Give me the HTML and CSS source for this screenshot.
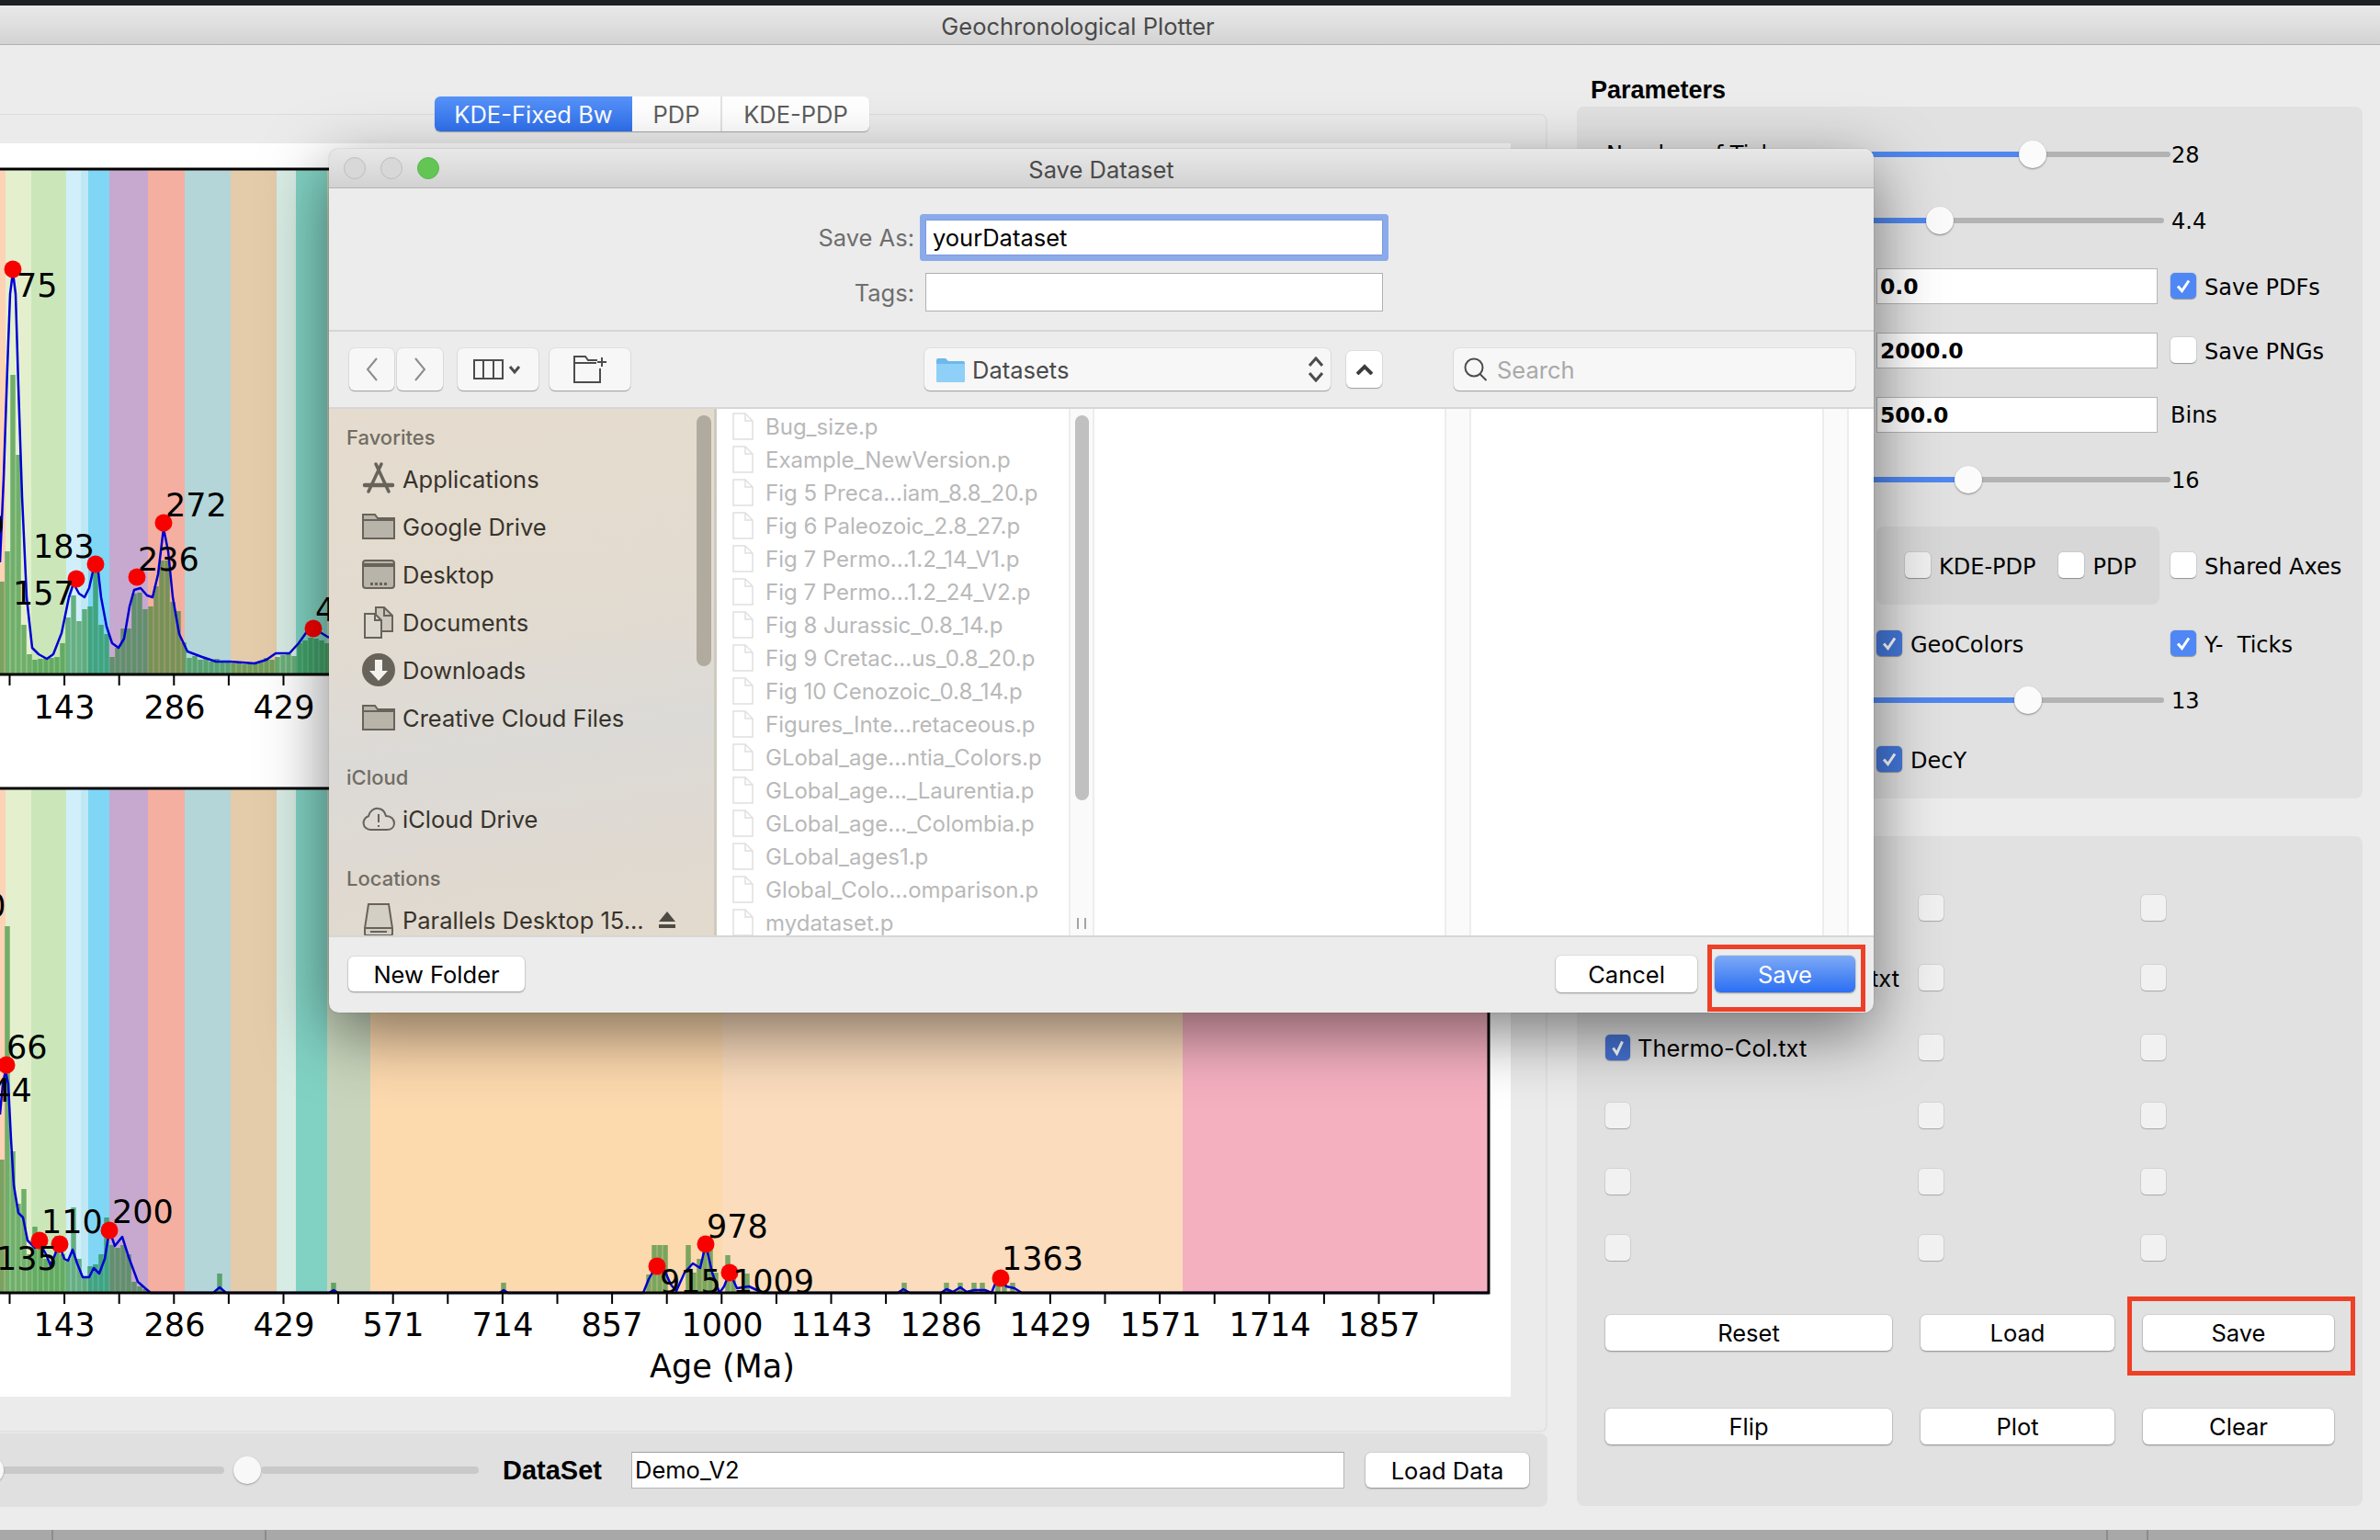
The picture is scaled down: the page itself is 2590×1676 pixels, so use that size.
FILE: index.html
```html
<!DOCTYPE html>
<html lang="en">
<head>
    <meta charset="UTF-8">
    <title>Geochronological Plotter</title>
    <link rel="stylesheet" href="styles.css">
</head>
<body>
    <div class="menubar"></div>
    <div class="titlebar">Geochronological Plotter</div>

    <div class="content">
        <div class="left-col">
            <div class="tabpane">
                <div class="tabs">
                    <span class="tab tab-active tab-kde">KDE-Fixed Bw</span>
                    <span class="tab tab-pdp">PDP</span>
                    <span class="tab tab-both">KDE-PDP</span>
                </div>
                <div class="figure">
                    <svg class="plot" width="1644" height="1364" viewBox="0 156 1644 1364">
                        <defs>
                            <g id="bands">
                                <rect x="0" y="0" width="6" height="1" fill="#fdd3b5"/>
                                <rect x="6" y="0" width="28" height="1" fill="#e4f0cd"/>
                                <rect x="34" y="0" width="38" height="1" fill="#cbe7ba"/>
                                <rect x="72" y="0" width="16" height="1" fill="#d0effb"/>
                                <rect x="88" y="0" width="8" height="1" fill="#bfe8f4"/>
                                <rect x="96" y="0" width="23" height="1" fill="#7fd7f5"/>
                                <rect x="119" y="0" width="42" height="1" fill="#c7a9cf"/>
                                <rect x="161" y="0" width="40" height="1" fill="#f4afa1"/>
                                <rect x="201" y="0" width="50" height="1" fill="#b4d6d9"/>
                                <rect x="251" y="0" width="50" height="1" fill="#e4cba9"/>
                                <rect x="301" y="0" width="21" height="1" fill="#d7ece4"/>
                                <rect x="322" y="0" width="34" height="1" fill="#81d2c3"/>
                                <rect x="356" y="0" width="47" height="1" fill="#c8d5bc"/>
                                <rect x="403" y="0" width="383" height="1" fill="#fdd9ae"/>
                                <rect x="786" y="0" width="501" height="1" fill="#fbdcbd"/>
                                <rect x="1287" y="0" width="333" height="1" fill="#f5b0c0"/>
                            </g>
                            <path id="ticks" d="M10.5 0v11M70.1 0v11M129.7 0v11M189.3 0v11M248.9 0v11M308.5 0v11M368.1 0v11M427.7 0v11M487.3 0v11M546.9 0v11M606.5 0v11M666.1 0v11M725.7 0v11M785.3 0v11M844.9 0v11M904.5 0v11M964.1 0v11M1023.7 0v11M1083.3 0v11M1142.9 0v11M1202.5 0v11M1262.1 0v11M1321.7 0v11M1381.3 0v11M1440.9 0v11M1500.5 0v11M1560.1 0v11"/>
                        </defs>

                        <!-- upper chart -->
                        <use href="#bands" transform="translate(0 185) scale(1 548)"/>
                        <path class="bars" d="M2 733V633M8 733V600M14 733V408M20 733V495M26 733V680M32 733V712M38 733V718M44 733V717M50 733V716M56 733V716M62 733V715M68 733V700M74 733V672M80 733V648M86 733V676M92 733V663M98 733V660M104 733V617M110 733V680M116 733V690M122 733V715M128 733V705M134 733V684M140 733V684M146 733V646M152 733V645M158 733V663M164 733V660M170 733V638M176 733V610M182 733V610M188 733V655M194 733V665M200 733V699M206 733V716M212 733V714M218 733V718M224 733V716M230 733V720M236 733V717M242 733V721M248 733V720M254 733V722M260 733V720M266 733V723M272 733V721M278 733V722M284 733V719M290 733V716M296 733V718M302 733V715M308 733V713M314 733V712M320 733V714M326 733V700M332 733V697M338 733V694M344 733V695M350 733V697M356 733V700"/>
                        <polyline class="curve" points="0,612 4,520 8,400 11,320 14,296 17,320 20,420 24,540 29,650 35,705 42,712 51,717 58,712 67,689 75,650 80,635 86,646 92,650 97,640 102,618 106,614 110,650 116,682 122,700 129,705 135,695 141,660 146,642 153,640 160,648 166,650 172,625 178,575 183,600 188,650 195,690 204,709 220,715 235,720 250,720 277,722 290,718 300,711 315,711 325,700 335,686 345,686 358,694"/>
                        <rect class="frame" x="-5" y="184" width="1625" height="550"/>
                        <use href="#ticks" class="tick" y="735"/>
                        <g class="dots">
                            <circle cx="14" cy="293" r="9.5"/>
                            <circle cx="83" cy="630" r="9.5"/>
                            <circle cx="104" cy="614" r="9.5"/>
                            <circle cx="149" cy="628" r="9.5"/>
                            <circle cx="178" cy="569" r="9.5"/>
                            <circle cx="341" cy="684" r="9.5"/>
                        </g>
                        <g class="peak">
                            <text x="18" y="323">75</text>
                            <text x="180" y="562">272</text>
                            <text x="36" y="607">183</text>
                            <text x="150" y="621">236</text>
                            <text x="14" y="658">157</text>
                            <text x="343" y="676">4</text>
                            <text x="-17" y="584">9</text>
                        </g>
                        <g class="axis">
                            <text x="70" y="782">143</text>
                            <text x="190" y="782">286</text>
                            <text x="309" y="782">429</text>
                        </g>

                        <!-- lower chart -->
                        <use href="#bands" transform="translate(0 859) scale(1 547)"/>
                        <path class="bars" d="M2 1406V1262M8 1406V1008M14 1406V1253M20 1406V1310M26 1406V1294M32 1406V1365M38 1406V1335M44 1406V1345M50 1406V1370M56 1406V1375M62 1406V1345M68 1406V1365M74 1406V1370M80 1406V1314M86 1406V1370M92 1406V1390M98 1406V1378M104 1406V1376M110 1406V1365M116 1406V1325M122 1406V1355M128 1406V1358M134 1406V1355M140 1406V1365M146 1406V1395M152 1406V1400M158 1406V1403M239 1406V1386M363 1406V1396M548 1406V1396M706 1406V1387M712 1406V1355M718 1406V1355M724 1406V1355M749 1406V1355M755 1406V1385M761 1406V1370M767 1406V1355M773 1406V1355M779 1406V1385M792 1406V1366M798 1406V1386M813 1406V1386M984 1406V1396M1030 1406V1396M1045 1406V1396M1060 1406V1396M1069 1406V1396M1086 1406V1396M1093 1406V1396M1102 1406V1396"/>
                        <polyline class="curve" points="0,1213 3,1180 6,1165 9,1180 12,1240 15,1290 20,1320 25,1325 30,1350 38,1358 43,1352 50,1365 55,1377 60,1365 64,1354 70,1370 74,1372 79,1360 84,1375 90,1390 97,1390 102,1380 108,1386 114,1370 119,1339 125,1356 133,1346 140,1368 150,1395 158,1402 164,1407 232,1407 239,1401 246,1407 358,1407 363,1404 368,1407 544,1407 548,1404 553,1407 700,1407 706,1392 714,1378 722,1380 730,1398 736,1405 745,1385 754,1375 762,1380 768,1354 775,1385 783,1407 788,1400 794,1385 802,1402 815,1400 830,1407 977,1407 983,1403 990,1407 1024,1407 1030,1403 1037,1406 1045,1401 1052,1406 1060,1404 1072,1404 1079,1407 1085,1392 1089,1390 1095,1400 1104,1402 1112,1407 1620,1407"/>
                        <rect class="frame" x="-5" y="858" width="1625" height="549"/>
                        <use href="#ticks" class="tick" y="1408"/>
                        <g class="dots">
                            <circle cx="7" cy="1159" r="9.5"/>
                            <circle cx="43" cy="1350" r="9.5"/>
                            <circle cx="65" cy="1354" r="9.5"/>
                            <circle cx="119" cy="1339" r="9.5"/>
                            <circle cx="715" cy="1378" r="9.5"/>
                            <circle cx="768" cy="1354" r="9.5"/>
                            <circle cx="794" cy="1385" r="9.5"/>
                            <circle cx="1089" cy="1391" r="9.5"/>
                        </g>
                        <g class="peak">
                            <text x="-38" y="998">90</text>
                            <text x="7" y="1152">66</text>
                            <text x="-32" y="1199">144</text>
                            <text x="45" y="1342">110</text>
                            <text x="122" y="1331">200</text>
                            <text x="-4" y="1382">135</text>
                            <text x="769" y="1347">978</text>
                            <text x="718" y="1407">915</text>
                            <text x="797" y="1407">1009</text>
                            <text x="1090" y="1382">1363</text>
                        </g>
                        <g class="axis">
                            <text x="70" y="1454">143</text>
                            <text x="190" y="1454">286</text>
                            <text x="309" y="1454">429</text>
                            <text x="428" y="1454">571</text>
                            <text x="547" y="1454">714</text>
                            <text x="666" y="1454">857</text>
                            <text x="786" y="1454">1000</text>
                            <text x="905" y="1454">1143</text>
                            <text x="1024" y="1454">1286</text>
                            <text x="1143" y="1454">1429</text>
                            <text x="1263" y="1454">1571</text>
                            <text x="1382" y="1454">1714</text>
                            <text x="1501" y="1454">1857</text>
                            <text x="786" y="1499">Age (Ma)</text>
                        </g>
                    </svg>
                </div>
            </div>

            <div class="datapanel">
                <div class="wide-slider">
                    <span class="wide-track"></span>
                    <span class="wide-knob"></span>
                    <span class="wide-track wide-track-end"></span>
                </div>
                <span class="dataset-label">DataSet</span>
                <div class="dataset-input">Demo_V2</div>
                <button class="btn load-data">Load Data</button>
            </div>
        </div>

        <div class="right-col">
            <h3 class="params-title">Parameters</h3>
            <div class="params">
                <div class="row row-s1">
                    <span class="row-label">Number of Ticks</span>
                    <div class="slider"><span class="fill" style="width:65.3%"></span><span class="knob" style="left:65.3%"></span></div>
                    <span class="value">28</span>
                </div>
                <div class="row row-s1">
                    <span class="row-label"></span>
                    <div class="slider slider-short"><span class="fill" style="width:42.6%"></span><span class="knob" style="left:42.6%"></span></div>
                    <span class="value value-far">4.4</span>
                </div>
                <div class="row row-field">
                    <div class="field">0.0</div>
                    <label class="check"><span class="cb cb-on"><svg width="28" height="28" viewBox="0 0 28 28"><path d="M8 14.5l4.5 5L20 8.5"/></svg></span>Save PDFs</label>
                </div>
                <div class="row row-field">
                    <div class="field">2000.0</div>
                    <label class="check"><span class="cb"></span>Save PNGs</label>
                </div>
                <div class="row row-field">
                    <div class="field">500.0</div>
                    <span class="bins">Bins</span>
                </div>
                <div class="row row-s1 row-s3">
                    <span class="row-label"></span>
                    <div class="slider"><span class="fill" style="width:49%"></span><span class="knob" style="left:49%"></span></div>
                    <span class="value">16</span>
                </div>
                <div class="row row-group">
                    <div class="group">
                        <label class="check"><span class="cb cb-soft"></span>KDE-PDP</label>
                        <label class="check"><span class="cb"></span>PDP</label>
                    </div>
                    <label class="check"><span class="cb"></span>Shared Axes</label>
                </div>
                <div class="row row-checks">
                    <label class="check check-left"><span class="cb cb-on cb-dim"><svg width="28" height="28" viewBox="0 0 28 28"><path d="M8 14.5l4.5 5L20 8.5"/></svg></span>GeoColors</label>
                    <label class="check"><span class="cb cb-on"><svg width="28" height="28" viewBox="0 0 28 28"><path d="M8 14.5l4.5 5L20 8.5"/></svg></span>Y-&nbsp;&nbsp;Ticks</label>
                </div>
                <div class="row row-s4">
                    <span class="row-label"></span>
                    <div class="slider slider-short"><span class="fill" style="width:65.2%"></span><span class="knob" style="left:65.2%"></span></div>
                    <span class="value value-far">13</span>
                </div>
                <div class="row row-last">
                    <label class="check check-left"><span class="cb cb-on cb-dim"><svg width="28" height="28" viewBox="0 0 28 28"><path d="M8 14.5l4.5 5L20 8.5"/></svg></span>DecY</label>
                </div>
            </div>

            <div class="datasets">
                <div class="ds-grid">
                    <div class="ds-cell"><span class="dcb"></span></div>
                    <div class="ds-cell"><span class="dcb"></span></div>
                    <div class="ds-cell"><span class="dcb"></span></div>
                    <div class="ds-cell"><span class="dcb"></span><span class="ds-name ds-name-cut">txt</span></div>
                    <div class="ds-cell"><span class="dcb"></span></div>
                    <div class="ds-cell"><span class="dcb"></span></div>
                    <div class="ds-cell"><span class="dcb dcb-on"><svg width="27" height="28" viewBox="0 0 27 28"><path d="M8.5 14.5l4 6L18.500 7.500"/></svg></span><span class="ds-name">Thermo-Col.txt</span></div>
                    <div class="ds-cell"><span class="dcb"></span></div>
                    <div class="ds-cell"><span class="dcb"></span></div>
                    <div class="ds-cell"><span class="dcb"></span></div>
                    <div class="ds-cell"><span class="dcb"></span></div>
                    <div class="ds-cell"><span class="dcb"></span></div>
                    <div class="ds-cell"><span class="dcb"></span></div>
                    <div class="ds-cell"><span class="dcb"></span></div>
                    <div class="ds-cell"><span class="dcb"></span></div>
                    <div class="ds-cell"><span class="dcb"></span></div>
                    <div class="ds-cell"><span class="dcb"></span></div>
                    <div class="ds-cell"><span class="dcb"></span></div>
                </div>
                <div class="actions">
                    <button class="btn">Reset</button>
                    <button class="btn">Load</button>
                    <button class="btn">Save</button>
                    <button class="btn">Flip</button>
                    <button class="btn">Plot</button>
                    <button class="btn">Clear</button>
                </div>
            </div>
        </div>
    </div>

    <div class="statusbar">
        <span class="status-cell status-a"></span>
        <span class="status-cell status-b"></span>
        <span class="status-cell status-c"></span>
        <span class="status-cell status-d"></span>
    </div>

    <!-- save sheet, floats over the main window -->
    <div class="dialog">
        <div class="dlg-title">
            <span class="light"></span>
            <span class="light"></span>
            <span class="light light-green"></span>
            <span class="dlg-title-text">Save Dataset</span>
        </div>

        <div class="dlg-form">
            <span class="dlg-label">Save As:</span>
            <div class="dlg-input dlg-input-focus">yourDataset</div>
            <span class="dlg-label">Tags:</span>
            <div class="dlg-input dlg-input-tags"></div>
        </div>

        <div class="dlg-toolbar">
            <button class="tool tool-back">
                <svg width="20" height="28" viewBox="0 0 20 28"><path class="ic-thin" d="M15 2L5 14l10 12"/></svg>
            </button>
            <button class="tool tool-fwd">
                <svg width="20" height="28" viewBox="0 0 20 28"><path class="ic-thin" d="M5 2l10 12L5 26"/></svg>
            </button>
            <button class="tool tool-view">
                <svg width="54" height="24" viewBox="0 0 54 24"><path class="ic-line" d="M1 2h31v20H1zM11 2v20M22 2v20"/><path class="ic-bold" d="M40 9l5 6 5-6"/></svg>
            </button>
            <button class="tool tool-new">
                <svg width="36" height="30" viewBox="0 0 36 30"><path class="ic-line" d="M1 8V1h12l3 4h10M1 8v21h28V14M1 8h24"/><path class="ic-line" d="M31 2v10M26 7h10"/></svg>
            </button>
            <button class="tool tool-popup">
                <svg class="popup-folder" width="31" height="27" viewBox="0 0 31 27"><path fill="#6cb9ec" d="M0 3a2 2 0 0 1 2-2h8l3 3h16a2 2 0 0 1 2 2v19a2 2 0 0 1-2 2H2a2 2 0 0 1-2-2z"/><path fill="#8ed0f7" d="M0 7h31v18a2 2 0 0 1-2 2H2a2 2 0 0 1-2-2z"/></svg>
                <span class="popup-text">Datasets</span>
                <svg class="popup-arrows" width="16" height="28" viewBox="0 0 16 28"><path class="ic-bold" d="M1 10l7-8 7 8M1 18l7 8 7-8"/></svg>
            </button>
            <button class="tool tool-up">
                <svg width="18" height="12" viewBox="0 0 18 12"><path class="ic-heavy" d="M1 11l8-8 8 8"/></svg>
            </button>
            <div class="tool-search">
                <svg width="26" height="26" viewBox="0 0 26 26"><circle class="ic-line" cx="11" cy="11" r="9.500"/><path class="ic-line" d="M17.500 18l7 7"/></svg>
                <span>Search</span>
            </div>
        </div>

        <div class="browser">
            <div class="sidebar">
                <div class="side-head">Favorites</div>
                <div class="side-row">
                    <svg class="side-ic" width="36" height="36" viewBox="0 0 36 36"><path fill="none" stroke="#67635b" stroke-width="3.500" stroke-linecap="round" d="M15 2l14 30M21 2L7 32"/><path fill="none" stroke="#67635b" stroke-width="4.500" stroke-linecap="round" d="M3 25h30"/></svg>
                    Applications
                </div>
                <div class="side-row">
                    <svg class="side-ic" width="36" height="30" viewBox="0 0 36 30"><path fill="#b9b4a9" stroke="#67635b" stroke-width="2" d="M1 28V2h13l3 4h18v22z"/><path fill="none" stroke="#67635b" stroke-width="2" d="M1 8h34"/></svg>
                    Google Drive
                </div>
                <div class="side-row">
                    <svg class="side-ic" width="36" height="32" viewBox="0 0 36 32"><rect x="1" y="1" width="34" height="30" rx="3" fill="#b9b4a9" stroke="#67635b" stroke-width="2"/><path fill="#67635b" d="M1 4h34v4H1zM9 25h3v3H9zM14 25h3v3h-3zM19 25h3v3h-3zM24 25h3v3h-3z"/></svg>
                    Desktop
                </div>
                <div class="side-row">
                    <svg class="side-ic" width="36" height="36" viewBox="0 0 36 36"><path fill="#cdc8be" stroke="#67635b" stroke-width="2" d="M15 2h9l9 9v17h-18z"/><path fill="#dcd8cf" stroke="#67635b" stroke-width="2" d="M3 9h11l7 7v19H3z"/><path fill="none" stroke="#67635b" stroke-width="2" d="M14 9v7h7M24 2v9h9"/></svg>
                    Documents
                </div>
                <div class="side-row">
                    <svg class="side-ic" width="36" height="36" viewBox="0 0 36 36"><circle cx="18" cy="18" r="18" fill="#67635b"/><path fill="#f3f1ec" d="M14 7h8v12h6L18 30 8 19h6z"/></svg>
                    Downloads
                </div>
                <div class="side-row">
                    <svg class="side-ic" width="36" height="30" viewBox="0 0 36 30"><path fill="#b9b4a9" stroke="#67635b" stroke-width="2" d="M1 28V2h13l3 4h18v22z"/><path fill="none" stroke="#67635b" stroke-width="2" d="M1 8h34"/></svg>
                    Creative Cloud Files
                </div>
                <div class="side-head side-head-gap">iCloud</div>
                <div class="side-row">
                    <svg class="side-ic" width="36" height="26" viewBox="0 0 36 26"><path fill="none" stroke="#67635b" stroke-width="2" d="M9 25a7.500 7.500 0 0 1-2-14.700C8 5 13 1 18 2c4 .5 7 4 8 8 6 0 9 4 9 8s-3 7-8 7zM18 8v9M18 20v2"/></svg>
                    iCloud Drive
                </div>
                <div class="side-head side-head-gap">Locations</div>
                <div class="side-row">
                    <svg class="side-ic" width="32" height="36" viewBox="0 0 32 36"><path fill="#d3cfc5" stroke="#67635b" stroke-width="2" d="M5 1h22l4 26v6a2 2 0 0 1-2 2H3a2 2 0 0 1-2-2v-6z"/><path fill="none" stroke="#67635b" stroke-width="2" d="M1 27h30M7 31h18"/></svg>
                    <span class="side-clip">Parallels Desktop 15...</span>
                    <svg class="eject" width="18" height="18" viewBox="0 0 18 18"><path fill="#4e4a43" d="M9 0l9 11H0zM0 14h18v4H0z"/></svg>
                </div>
                <span class="side-thumb"></span>
            </div>

            <div class="files">
                <div class="file"><svg class="page" width="23" height="30" viewBox="0 0 23 30"><path d="M1 1h13l8 8v20H1zM14 1v8h8"/></svg>Bug_size.p</div>
                <div class="file"><svg class="page" width="23" height="30" viewBox="0 0 23 30"><path d="M1 1h13l8 8v20H1zM14 1v8h8"/></svg>Example_NewVersion.p</div>
                <div class="file"><svg class="page" width="23" height="30" viewBox="0 0 23 30"><path d="M1 1h13l8 8v20H1zM14 1v8h8"/></svg>Fig 5 Preca...iam_8.8_20.p</div>
                <div class="file"><svg class="page" width="23" height="30" viewBox="0 0 23 30"><path d="M1 1h13l8 8v20H1zM14 1v8h8"/></svg>Fig 6 Paleozoic_2.8_27.p</div>
                <div class="file"><svg class="page" width="23" height="30" viewBox="0 0 23 30"><path d="M1 1h13l8 8v20H1zM14 1v8h8"/></svg>Fig 7 Permo...1.2_14_V1.p</div>
                <div class="file"><svg class="page" width="23" height="30" viewBox="0 0 23 30"><path d="M1 1h13l8 8v20H1zM14 1v8h8"/></svg>Fig 7 Permo...1.2_24_V2.p</div>
                <div class="file"><svg class="page" width="23" height="30" viewBox="0 0 23 30"><path d="M1 1h13l8 8v20H1zM14 1v8h8"/></svg>Fig 8 Jurassic_0.8_14.p</div>
                <div class="file"><svg class="page" width="23" height="30" viewBox="0 0 23 30"><path d="M1 1h13l8 8v20H1zM14 1v8h8"/></svg>Fig 9 Cretac...us_0.8_20.p</div>
                <div class="file"><svg class="page" width="23" height="30" viewBox="0 0 23 30"><path d="M1 1h13l8 8v20H1zM14 1v8h8"/></svg>Fig 10 Cenozoic_0.8_14.p</div>
                <div class="file"><svg class="page" width="23" height="30" viewBox="0 0 23 30"><path d="M1 1h13l8 8v20H1zM14 1v8h8"/></svg>Figures_Inte...retaceous.p</div>
                <div class="file"><svg class="page" width="23" height="30" viewBox="0 0 23 30"><path d="M1 1h13l8 8v20H1zM14 1v8h8"/></svg>GLobal_age...ntia_Colors.p</div>
                <div class="file"><svg class="page" width="23" height="30" viewBox="0 0 23 30"><path d="M1 1h13l8 8v20H1zM14 1v8h8"/></svg>GLobal_age..._Laurentia.p</div>
                <div class="file"><svg class="page" width="23" height="30" viewBox="0 0 23 30"><path d="M1 1h13l8 8v20H1zM14 1v8h8"/></svg>GLobal_age..._Colombia.p</div>
                <div class="file"><svg class="page" width="23" height="30" viewBox="0 0 23 30"><path d="M1 1h13l8 8v20H1zM14 1v8h8"/></svg>GLobal_ages1.p</div>
                <div class="file"><svg class="page" width="23" height="30" viewBox="0 0 23 30"><path d="M1 1h13l8 8v20H1zM14 1v8h8"/></svg>Global_Colo...omparison.p</div>
                <div class="file"><svg class="page" width="23" height="30" viewBox="0 0 23 30"><path d="M1 1h13l8 8v20H1zM14 1v8h8"/></svg>mydataset.p</div>
            </div>
            <div class="gutter">
                <span class="gutter-thumb"></span>
                <span class="grip"></span>
            </div>
            <div class="col col-2"></div>
            <div class="gutter gutter-plain"></div>
            <div class="col col-3"></div>
            <div class="gutter gutter-plain"></div>
            <div class="col"></div>
        </div>

        <div class="dlg-foot">
            <button class="btn btn-folder">New Folder</button>
            <button class="btn btn-cancel">Cancel</button>
            <button class="btn btn-save">Save</button>
        </div>
    </div>

    <div class="mark mark-sheet"></div>
    <div class="mark mark-main"></div>
</body>
</html>
```

FILE: styles.css
```css
* {
    box-sizing: border-box;
}
body {
    margin: 0;
    width: 2590px;
    height: 1676px;
    overflow: hidden;
    position: relative;
    display: flex;
    flex-direction: column;
    background-color: #ececec;
    color: #000;
    font-family: "Inter", "Liberation Sans", sans-serif;
    font-size: 25.500px;
}
button {
    font-family: inherit;
    font-size: inherit;
    padding: 0;
    border: none;
}

.menubar {
    height: 6px;
    background-color: #1e1f21;
}
.titlebar {
    height: 43px;
    line-height: 45px;
    text-align: center;
    padding-right: 244px;
    color: #4a4a4a;
    background: linear-gradient(#e9e9e9, #d3d3d3);
    border-bottom: 1px solid #b2b2b2;
}
.content {
    flex: 1;
    display: flex;
    min-height: 0;
}
.statusbar {
    height: 11px;
    display: flex;
    background-color: #a8a8a8;
}
.status-cell {
    border-right: 2px solid #8c8c8c;
}
.status-a { width: 58px; }
.status-b { width: 232px; }
.status-c { width: 2004px; }
.status-d { width: 44px; }

/* left side: tabs, figure, data row */
.left-col {
    width: 1684px;
    padding-top: 75px;
    display: flex;
    flex-direction: column;
}
.tabpane {
    height: 1435px;
    background-color: #ebebeb;
    border-top: 1px solid #dcdcdc;
    border-right: 2px solid #e2e2e2;
    border-bottom: 2px solid #e2e2e2;
    border-radius: 0 8px 8px 0;
}
.tabs {
    display: flex;
    width: 473px;
    height: 38px;
    margin: -20px 0 13px 473px;
    border-radius: 6px;
    background-color: #fff;
    box-shadow: 0 1px 1px rgba(0, 0, 0, 0.3);
    color: #5e5e5e;
    position: relative;
}
.tab {
    line-height: 40px;
    text-align: center;
}
.tab-kde {
    width: 215px;
    border-radius: 6px 0 0 6px;
}
.tab-pdp {
    width: 98px;
    border-right: 2px solid #e3e3e3;
}
.tab-both {
    width: 160px;
}
.tab-active {
    color: #fff;
    background: linear-gradient(#5793f7, #2f70ef);
}
.figure {
    width: 1644px;
    height: 1364px;
    background-color: #fff;
}
.plot {
    display: block;
}
.bars {
    fill: none;
    stroke: #0f7a1c;
    stroke-opacity: 0.55;
    stroke-width: 5.5;
}
.curve {
    fill: none;
    stroke: #0000d2;
    stroke-width: 2.500;
    stroke-linejoin: round;
}
.frame {
    fill: none;
    stroke: #000;
    stroke-width: 3;
}
.tick {
    fill: none;
    stroke: #000;
    stroke-width: 2;
}
.dots circle {
    fill: #f90000;
}
.peak text,
.axis text {
    font-family: "DejaVu Sans", sans-serif;
    font-size: 35px;
    fill: #000;
}
.axis text {
    text-anchor: middle;
}

.datapanel {
    height: 80px;
    margin-top: 1px;
    display: flex;
    align-items: center;
    background-color: #e0e0e0;
    border-radius: 0 8px 8px 0;
}
.wide-slider {
    width: 521px;
    display: flex;
    align-items: center;
    position: relative;
}
.wide-slider::before {
    content: "";
    position: absolute;
    left: -26px;
    width: 30px;
    height: 30px;
    border-radius: 50%;
    background-color: #f8f8f8;
    box-shadow: 0 1px 2px rgba(0, 0, 0, 0.3);
}
.wide-track {
    width: 244px;
    height: 8px;
    flex-shrink: 0;
    background-color: #c9c9c9;
    border-radius: 4px;
}
.wide-track-end {
    width: 237px;
}
.wide-knob {
    width: 30px;
    height: 30px;
    flex-shrink: 0;
    margin-left: 10px;
    border-radius: 50%;
    background-color: #f8f8f8;
    box-shadow: 0 1px 2px rgba(0, 0, 0, 0.3);
}
.dataset-label {
    width: 140px;
    margin-left: 26px;
    font-family: "Liberation Sans", sans-serif;
    font-size: 29px;
    font-weight: bold;
}
.dataset-input {
    width: 776px;
    height: 40px;
    line-height: 38px;
    padding-left: 3px;
    background-color: #fff;
    border: 1px solid #b4b4b4;
    border-top-color: #a0a0a0;
}
.btn {
    background-color: #fff;
    border-radius: 6px;
    color: #000;
    box-shadow: 0 1px 2px rgba(0, 0, 0, 0.35), 0 0 0 1px rgba(0, 0, 0, 0.05);
}
.load-data {
    width: 178px;
    height: 38px;
    margin-left: 23px;
}

/* right side */
.right-col {
    flex: 1;
    padding-left: 32px;
}
.params-title {
    margin: 0;
    height: 67px;
    padding: 30px 0 0 15px;
    font-family: "Liberation Sans", sans-serif;
    font-size: 27px;
    line-height: 38px;
    font-weight: bold;
}
.params {
    width: 855px;
    height: 753px;
    padding-top: 16px;
    background-color: #e1e1e1;
    border-radius: 8px;
    font-family: "DejaVu Sans", sans-serif;
    font-size: 24px;
}
.row {
    display: flex;
    align-items: center;
    height: 70px;
    padding-left: 32px;
}
.row-s1 { height: 72px; }
.row-s4 { height: 68px; }
.row-field,
.row-group { padding-left: 326px; }
.row-group { height: 114px; }
.row-checks { padding-left: 326px; height: 56px; }
.row-last { padding-left: 326px; height: 60px; }
.row-label {
    width: 182px;
    white-space: nowrap;
}
.slider {
    width: 432px;
    height: 6px;
    position: relative;
    background-color: #b3b3b3;
    border-radius: 3px;
}
.slider-short {
    width: 425px;
}
.fill {
    position: absolute;
    left: 0;
    top: 0;
    height: 6px;
    background-color: #4f87ef;
    border-radius: 3px 0 0 3px;
}
.knob {
    position: absolute;
    top: -12px;
    width: 30px;
    height: 30px;
    margin-left: -15px;
    border-radius: 50%;
    background-color: #fbfbfb;
    box-shadow: 0 1px 2px rgba(0, 0, 0, 0.4);
}
.value {
    margin-left: 1px;
    padding-top: 2px;
}
.value-far {
    margin-left: 8px;
}
.field {
    width: 306px;
    height: 39px;
    line-height: 39px;
    padding-left: 3px;
    font-weight: bold;
    font-size: 23.500px;
    background-color: #fff;
    border: 1px solid #b5b5b5;
}
.check {
    display: flex;
    align-items: center;
    gap: 9px;
    padding-top: 4px;
}
.row-field .check {
    margin-left: 14px;
}
.row-group > .check {
    margin-left: 12px;
}
.row-checks .check-left {
    width: 320px;
}
.bins {
    margin-left: 14px;
    padding-top: 2px;
}
.cb {
    width: 28px;
    height: 28px;
    margin-top: -4px;
    border-radius: 5px;
    background-color: #fff;
    box-shadow: 0 1px 1px rgba(0, 0, 0, 0.3), 0 0 0 1px rgba(0, 0, 0, 0.06);
}
.cb svg,
.dcb svg {
    display: block;
}
.cb path,
.dcb path {
    fill: none;
    stroke: #fff;
    stroke-width: 3;
}
.cb-on {
    background-color: #4f87f5;
}
.cb-dim {
    background-color: #4478db;
}
.cb-soft {
    background-color: #f0f0f0;
}
.group {
    width: 308px;
    height: 85px;
    padding-left: 31px;
    display: flex;
    align-items: center;
    gap: 25px;
    background-color: #d7d7d7;
    border-radius: 8px;
}

.datasets {
    width: 855px;
    height: 729px;
    margin-top: 41px;
    padding: 40px 0 0 31px;
    background-color: #e1e1e1;
    border-radius: 8px;
}
.ds-grid {
    display: grid;
    grid-template-columns: 341px 242px 200px;
    grid-template-rows: 76px 76px 76px 72px 72px 72px;
}
.ds-cell {
    display: flex;
    align-items: center;
    gap: 8px;
}
.dcb {
    width: 27px;
    height: 28px;
    border-radius: 5px;
    background-color: #f1f1f1;
    box-shadow: 0 1px 1px rgba(0, 0, 0, 0.2), 0 0 0 1px rgba(0, 0, 0, 0.06);
}
.dcb-on {
    background-color: #4472d3;
}
.ds-name {
    white-space: nowrap;
}
.ds-name-cut {
    width: 285px;
    text-align: right;
    flex-shrink: 0;
}
.actions {
    display: grid;
    grid-template-columns: 312px 211px 208px;
    grid-template-rows: 39px 39px;
    column-gap: 31px;
    row-gap: 63px;
    margin-top: 37px;
}

/* save dialog */
.dialog {
    position: absolute;
    left: 358px;
    top: 162px;
    width: 1681px;
    height: 940px;
    display: flex;
    flex-direction: column;
    overflow: hidden;
    background-color: #ececec;
    border-radius: 10px;
    color: #4a4a4a;
    box-shadow: 0 0 1px rgba(0, 0, 0, 0.5), 0 22px 70px rgba(0, 0, 0, 0.5);
}
.dlg-title {
    height: 43px;
    display: flex;
    align-items: center;
    gap: 16px;
    padding-left: 16px;
    position: relative;
    background: linear-gradient(#e8e8e8, #d2d2d2);
    border-bottom: 1px solid #b4b4b4;
}
.light {
    width: 24px;
    height: 24px;
    border-radius: 50%;
    background-color: #d8d8d8;
    border: 1px solid #bdbdbd;
}
.light-green {
    background-color: #62c554;
    border-color: #59b84b;
}
.dlg-title-text {
    position: absolute;
    left: 0;
    right: 0;
    top: 1px;
    line-height: 43px;
    text-align: center;
}
.dlg-form {
    height: 156px;
    padding-top: 34px;
    display: grid;
    grid-template-columns: 637px 498px;
    grid-template-rows: 39px 42px;
    column-gap: 12px;
    row-gap: 19px;
    align-items: center;
    border-bottom: 2px solid #d6d6d6;
    color: #6e6e6e;
}
.dlg-label {
    text-align: right;
}
.dlg-input {
    background-color: #fff;
    height: 100%;
    border: 1px solid #b0b0b0;
}
.dlg-input-focus {
    border: 1px solid #7c9be0;
    color: #000;
    line-height: 38px;
    padding-left: 7px;
    box-shadow: 0 0 0 6px #8aaaea;
    border-radius: 1px;
}
.dlg-toolbar {
    height: 84px;
    display: flex;
    align-items: center;
    padding-left: 22px;
    border-bottom: 2px solid #d6d6d6;
}
.tool {
    height: 46px;
    display: flex;
    align-items: center;
    justify-content: center;
    border-radius: 6px;
    background-color: #f7f7f7;
    box-shadow: 0 1px 1px rgba(0, 0, 0, 0.3), 0 0 0 1px rgba(0, 0, 0, 0.05);
    color: #4a4a4a;
}
.tool-back { width: 49px; }
.tool-fwd { width: 50px; margin-left: 3px; }
.tool-view { width: 88px; margin-left: 16px; }
.tool-new { width: 88px; margin-left: 12px; }
.tool-popup {
    width: 442px;
    margin-left: 320px;
    justify-content: flex-start;
    padding-left: 13px;
    position: relative;
}
.popup-text {
    margin-left: 8px;
}
.popup-arrows {
    position: absolute;
    right: 8px;
    top: 9px;
}
.tool-up {
    width: 39px;
    height: 40px;
    margin-left: 17px;
    background-color: #fff;
}
.tool-search {
    width: 437px;
    height: 46px;
    margin-left: 78px;
    display: flex;
    align-items: center;
    gap: 10px;
    padding-left: 11px;
    border-radius: 6px;
    background-color: #f7f7f7;
    box-shadow: 0 1px 1px rgba(0, 0, 0, 0.3), 0 0 0 1px rgba(0, 0, 0, 0.05);
    color: #a9a9a9;
}
.ic-thin,
.ic-line,
.ic-bold,
.ic-heavy {
    fill: none;
}
.ic-thin {
    stroke: #8c8c8c;
    stroke-width: 2;
}
.ic-line {
    stroke: #4c4c4c;
    stroke-width: 2;
}
.ic-bold {
    stroke: #4c4c4c;
    stroke-width: 3;
}
.ic-heavy {
    stroke: #3c3c3c;
    stroke-width: 4;
}

.browser {
    height: 573px;
    display: flex;
    background-color: #fff;
}
.sidebar {
    width: 422px;
    padding: 12px 0 0 19px;
    position: relative;
    overflow: hidden;
    background: linear-gradient(172deg, #e5dccf 0%, #e3dbcf 36%, #dcdad7 62%, #dfd9d1 82%, #e3dacd 100%);
    border-right: 3px solid #cfcabf;
    color: #37332c;
}
.side-head {
    height: 38px;
    line-height: 38px;
    font-size: 22px;
    font-weight: 500;
    color: #716c63;
}
.side-head-gap {
    margin-top: 20px;
}
.side-row {
    height: 52px;
    display: flex;
    align-items: center;
    gap: 8px;
    padding-left: 17px;
    white-space: nowrap;
}
.side-ic {
    width: 36px;
    flex-shrink: 0;
}
.side-clip {
    width: 266px;
}
.eject {
    margin-left: 5px;
}
.side-thumb {
    position: absolute;
    left: 400px;
    top: 7px;
    width: 16px;
    height: 273px;
    border-radius: 8px;
    background-color: #b1ab9f;
}
.files {
    width: 383px;
    padding-top: 1px;
    overflow: hidden;
    color: #b9b9b9;
    font-size: 24px;
}
.file {
    height: 36px;
    display: flex;
    align-items: center;
    gap: 13px;
    padding-left: 17px;
    white-space: nowrap;
}
.page {
    flex-shrink: 0;
}
.page path {
    fill: #fff;
    stroke: #e0e0e0;
    stroke-width: 1.500;
}
.gutter {
    width: 28px;
    position: relative;
    background-color: #fafafa;
    border-left: 2px solid #ededed;
    border-right: 2px solid #ededed;
}
.gutter-thumb {
    position: absolute;
    left: 5px;
    top: 7px;
    width: 15px;
    height: 419px;
    border-radius: 8px;
    background-color: #c0c0c0;
}
.grip {
    position: absolute;
    left: 7px;
    bottom: 7px;
    width: 10px;
    height: 12px;
    border-left: 2px solid #a4a4a4;
    border-right: 2px solid #a4a4a4;
}
.col {
    flex: 1;
    background-color: #fff;
}
.col-2 {
    flex: none;
    width: 381px;
}
.col-3 {
    flex: none;
    width: 382px;
}
.gutter-plain {
    width: 29px;
}
.dlg-foot {
    flex: 1;
    display: flex;
    align-items: center;
    padding: 0 20px 2px 21px;
    border-top: 2px solid #d6d6d6;
}
.btn-folder {
    width: 192px;
    height: 38px;
}
.btn-cancel {
    width: 154px;
    height: 40px;
    margin-left: auto;
}
.btn-save {
    width: 153px;
    height: 40px;
    margin-left: 19px;
    color: #fff;
    background: linear-gradient(#7eaaf6, #2b6ff3);
}

/* red annotation boxes from the screenshot author */
.mark {
    position: absolute;
    border: 5px solid #ee4027;
}
.mark-sheet {
    left: 1858px;
    top: 1028px;
    width: 172px;
    height: 73px;
}
.mark-main {
    left: 2315px;
    top: 1411px;
    width: 248px;
    height: 86px;
}
```
